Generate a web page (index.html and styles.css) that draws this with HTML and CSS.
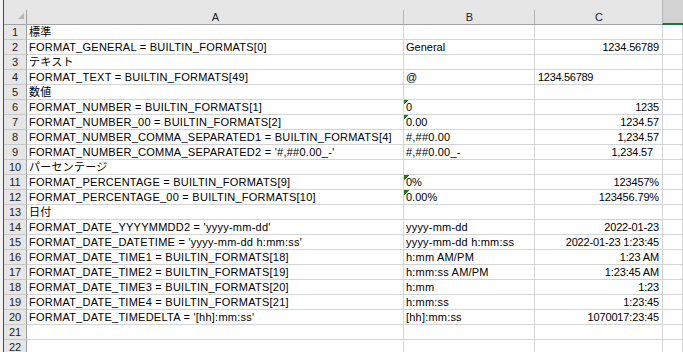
FILE: index.html
```html
<!DOCTYPE html>
<html lang="ja">
<head>
<meta charset="utf-8">
<title>Sheet</title>
<link rel="stylesheet" href="styles.css">
</head>
<body>
<div class="wrap">
  <div class="strip"></div>
  <div class="sheet">
    <div class="row head">
      <div class="c corner"><svg width="6" height="6" viewBox="0 0 6 6"><polygon points="6,0 6,6 0,6" fill="#b5b5b5"/></svg></div>
      <div class="c hc">A</div>
      <div class="c hc">B</div>
      <div class="c hc">C</div>
      <div class="c hc sel"></div>
    </div>
    <div class="row"><div class="c rh">1</div><div class="c a">標準</div><div class="c"></div><div class="c"></div><div class="c"></div></div>
    <div class="row"><div class="c rh">2</div><div class="c a">FORMAT_GENERAL = BUILTIN_FORMATS[0]</div><div class="c">General</div><div class="c r">1234.56789</div><div class="c"></div></div>
    <div class="row"><div class="c rh">3</div><div class="c a">テキスト</div><div class="c"></div><div class="c"></div><div class="c"></div></div>
    <div class="row"><div class="c rh">4</div><div class="c a">FORMAT_TEXT = BUILTIN_FORMATS[49]</div><div class="c">@</div><div class="c n l3">1234.56789</div><div class="c"></div></div>
    <div class="row"><div class="c rh">5</div><div class="c a">数値</div><div class="c"></div><div class="c"></div><div class="c"></div></div>
    <div class="row"><div class="c rh">6</div><div class="c a">FORMAT_NUMBER = BUILTIN_FORMATS[1]</div><div class="c tri">0</div><div class="c r">1235</div><div class="c"></div></div>
    <div class="row"><div class="c rh">7</div><div class="c a">FORMAT_NUMBER_00 = BUILTIN_FORMATS[2]</div><div class="c tri">0.00</div><div class="c r">1234.57</div><div class="c"></div></div>
    <div class="row"><div class="c rh">8</div><div class="c a">FORMAT_NUMBER_COMMA_SEPARATED1 = BUILTIN_FORMATS[4]</div><div class="c b">#,##0.00</div><div class="c r">1,234.57</div><div class="c"></div></div>
    <div class="row"><div class="c rh">9</div><div class="c a">FORMAT_NUMBER_COMMA_SEPARATED2 = '#,##0.00_-'</div><div class="c b">#,##0.00_-</div><div class="c r pad">1,234.57</div><div class="c"></div></div>
    <div class="row"><div class="c rh">10</div><div class="c a">パーセンテージ</div><div class="c"></div><div class="c"></div><div class="c"></div></div>
    <div class="row"><div class="c rh">11</div><div class="c a">FORMAT_PERCENTAGE = BUILTIN_FORMATS[9]</div><div class="c tri">0%</div><div class="c r">123457%</div><div class="c"></div></div>
    <div class="row"><div class="c rh">12</div><div class="c a">FORMAT_PERCENTAGE_00 = BUILTIN_FORMATS[10]</div><div class="c tri">0.00%</div><div class="c r">123456.79%</div><div class="c"></div></div>
    <div class="row"><div class="c rh">13</div><div class="c a">日付</div><div class="c"></div><div class="c"></div><div class="c"></div></div>
    <div class="row"><div class="c rh">14</div><div class="c a">FORMAT_DATE_YYYYMMDD2 = 'yyyy-mm-dd'</div><div class="c b">yyyy-mm-dd</div><div class="c r">2022-01-23</div><div class="c"></div></div>
    <div class="row"><div class="c rh">15</div><div class="c a">FORMAT_DATE_DATETIME = 'yyyy-mm-dd h:mm:ss'</div><div class="c b">yyyy-mm-dd h:mm:ss</div><div class="c r">2022-01-23 1:23:45</div><div class="c"></div></div>
    <div class="row"><div class="c rh">16</div><div class="c a">FORMAT_DATE_TIME1 = BUILTIN_FORMATS[18]</div><div class="c b">h:mm AM/PM</div><div class="c r">1:23 AM</div><div class="c"></div></div>
    <div class="row"><div class="c rh">17</div><div class="c a">FORMAT_DATE_TIME2 = BUILTIN_FORMATS[19]</div><div class="c b">h:mm:ss AM/PM</div><div class="c r">1:23:45 AM</div><div class="c"></div></div>
    <div class="row"><div class="c rh">18</div><div class="c a">FORMAT_DATE_TIME3 = BUILTIN_FORMATS[20]</div><div class="c b">h:mm</div><div class="c r">1:23</div><div class="c"></div></div>
    <div class="row"><div class="c rh">19</div><div class="c a">FORMAT_DATE_TIME4 = BUILTIN_FORMATS[21]</div><div class="c b">h:mm:ss</div><div class="c r">1:23:45</div><div class="c"></div></div>
    <div class="row"><div class="c rh">20</div><div class="c a">FORMAT_DATE_TIMEDELTA = '[hh]:mm:ss'</div><div class="c b">[hh]:mm:ss</div><div class="c r">1070017:23:45</div><div class="c"></div></div>
    <div class="row"><div class="c rh">21</div><div class="c"></div><div class="c"></div><div class="c"></div><div class="c"></div></div>
    <div class="row"><div class="c rh">22</div><div class="c"></div><div class="c"></div><div class="c"></div><div class="c"></div></div>
  </div>
</div>
</body>
</html>
```

FILE: styles.css
```css
* { box-sizing: border-box; }
html, body { margin: 0; padding: 0; background: #fff; }
body {
  font-family: "Liberation Sans", "Noto Sans CJK JP", sans-serif;
  font-size: 11px;
  color: #000;
  width: 683px;
  height: 352px;
  overflow: hidden;
}
.wrap { display: flex; height: 352px; overflow: hidden; }
.strip {
  width: 4px;
  flex: none;
  background: #f3f3f3;
  border-right: 1px solid #2a5e38;
}
.sheet { flex: 1; min-width: 0; }
.row {
  display: grid;
  grid-template-columns: 23px 377px 131px 128px 1fr;
  height: 15px;
}
.row.head { height: 25px; }
.c {
  border-right: 1px solid #d4d4d4;
  border-bottom: 1px solid #d4d4d4;
  line-height: 14px;
  padding: 0 2px;
  white-space: nowrap;
  overflow: hidden;
}
.a { letter-spacing: 0.25px; }
.b { letter-spacing: 0.2px; }
.r { text-align: right; padding-right: 3px; letter-spacing: -0.15px; }
.n { letter-spacing: -0.3px; }
.pad { padding-right: 9px; }
.l3 { padding-left: 3px; }
.tri {
  background: linear-gradient(135deg, #1f7a1f 50%, transparent 50%) no-repeat left top / 5px 5px;
}
.rh {
  background: #e6e6e6;
  border-right-color: #9f9f9f;
  border-bottom-color: #c8c8c8;
  text-align: center;
  color: #222;
  padding: 0;
}
.head .c {
  border-right: 0;
  border-bottom: 1px solid #a3a3a3;
  background: linear-gradient(#b5b5b5, #b5b5b5) no-repeat right bottom / 1px 14px, #e6e6e6;
  padding-top: 10px;
  text-align: center;
  color: #222;
}
.head .corner {
  display: flex;
  justify-content: flex-end;
  align-items: flex-end;
  padding: 0 3px 5px 0;
  background: linear-gradient(#9f9f9f, #9f9f9f) no-repeat right bottom / 1px 14px, #e6e6e6;
}
.head .corner svg { display: block; }
.head .sel {
  background: #d2d2d2;
  border-left: 1px solid #b5b5b5;
  border-bottom: 2px solid #217346;
  margin-left: -1px;
}
```
